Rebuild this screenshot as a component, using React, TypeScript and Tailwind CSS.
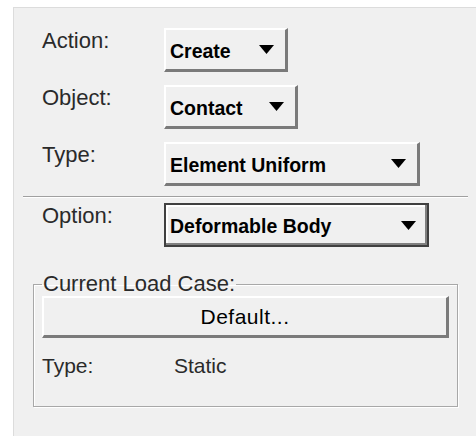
import { ReactNode } from "react";

const font = { fontFamily: '"Liberation Sans", Arial, sans-serif' };

// small black arrow used on the option menus
function DownArrow() {
  return (
    <svg width="15" height="9" viewBox="0 0 15 9" className="shrink-0">
      <polygon points="0,0 15,0 7.5,9" fill="#000" />
    </svg>
  );
}

function MenuButton({ label, width, focused }: { label: string; width: string; focused?: boolean }) {
  return (
    <button
      className={`flex h-[44px] items-center justify-between bg-[#f0f0f0] pr-[11px] pl-[4px] text-[19.5px] font-bold text-black ${width} ${
        focused
          ? "border-[2px] border-[#404040] shadow-[inset_-2px_-2px_0_#808080,inset_2px_2px_0_#ffffff]"
          : "border-t-2 border-l-2 border-t-white border-l-white border-b-[3px] border-r-[3px] border-b-[#7a7a7a] border-r-[#7a7a7a]"
      }`}
    >
      <span className="pt-[4px]">{label}</span>
      <DownArrow />
    </button>
  );
}

function Row({ label, children }: { label: string; children: ReactNode }) {
  return (
    <div className="flex items-start">
      <div className="w-[122px] -mt-[4px] text-[22px] text-[#2a2a2a]">{label}</div>
      {children}
    </div>
  );
}

export default function App() {
  return (
    <div className="h-[436px] w-[476px] bg-white pt-[7px] pl-[13px]" style={font}>
      <div className="h-full w-full border-t border-l border-[#dcdcdc] bg-[#f0f0f0] pt-[20px]">
        <div className="flex flex-col gap-[13px] pl-[28px]">
          <Row label="Action:">
            <MenuButton label="Create" width="w-[124px]" />
          </Row>
          <Row label="Object:">
            <MenuButton label="Contact" width="w-[134px]" />
          </Row>
          <Row label="Type:">
            <MenuButton label="Element Uniform" width="w-[256px]" />
          </Row>
        </div>

        <div className="mt-[10px] ml-[9px] mr-[8px] border-t border-b border-t-[#a0a0a0] border-b-white" />

        <div className="mt-[5px] pl-[28px]">
          <Row label="Option:">
            <MenuButton label="Deformable Body" width="w-[265px]" focused />
          </Row>
        </div>

        <fieldset className="mt-[27px] ml-[19px] mr-[18px] h-[133px] border border-[#a8a8a8] shadow-[1px_1px_0_#ffffff,inset_1px_1px_0_#ffffff] px-[8px]">
          <legend className="px-[1px] text-[22px] leading-[20px] text-[#2a2a2a]">Current Load Case:</legend>
          <button className="mt-[2px] h-[42px] w-full border-t-2 border-l-2 border-t-white border-l-white border-b-[3px] border-r-[3px] border-b-[#7a7a7a] border-r-[#7a7a7a] bg-[#f0f0f0] text-[21px] tracking-[0.5px] text-black">
            Default...
          </button>
          <div className="mt-[12px] flex text-[21px] text-[#2a2a2a]">
            <span className="w-[132px]">Type:</span>
            <span>Static</span>
          </div>
        </fieldset>
      </div>
    </div>
  );
}
